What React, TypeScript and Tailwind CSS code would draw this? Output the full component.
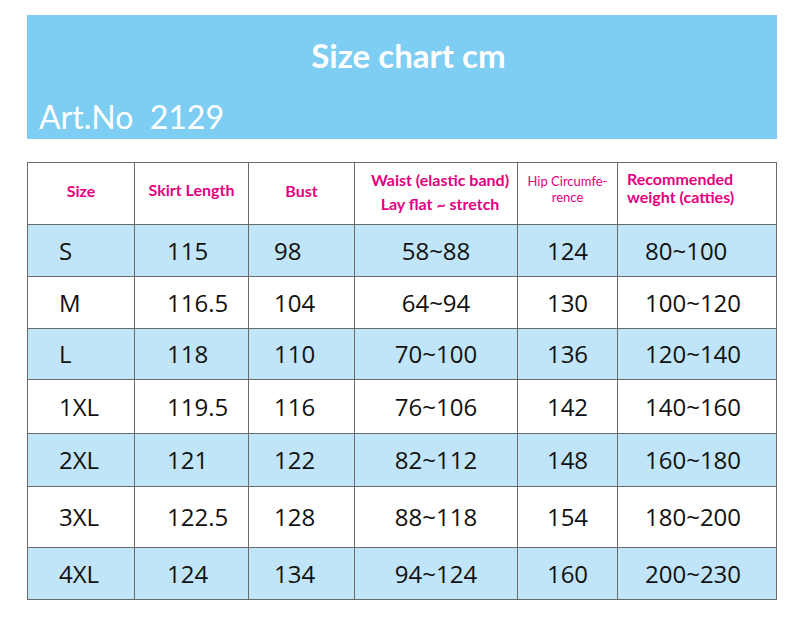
import React from "react";

const rows: { s: string; v: string[]; h: number; blue: boolean }[] = [
  { s: "S", v: ["115", "98", "58~88", "124", "80~100"], h: 52, blue: true },
  { s: "M", v: ["116.5", "104", "64~94", "130", "100~120"], h: 52, blue: false },
  { s: "L", v: ["118", "110", "70~100", "136", "120~140"], h: 51, blue: true },
  { s: "1XL", v: ["119.5", "116", "76~106", "142", "140~160"], h: 54, blue: false },
  { s: "2XL", v: ["121", "122", "82~112", "148", "160~180"], h: 53, blue: true },
  { s: "3XL", v: ["122.5", "128", "88~118", "154", "180~200"], h: 61, blue: false },
  { s: "4XL", v: ["124", "134", "94~124", "160", "200~230"], h: 52, blue: true },
];

const cellBase = "border border-[#6a6a6a] align-middle p-0";

export default function App() {
  return (
    <div className="w-[800px] h-[626px] bg-white relative" style={{ fontFamily: "Lato, 'Open Sans', sans-serif" }}>
      <div className="pt-[15px] pl-[27px]">
        <div className="w-[750px] h-[124px] bg-[#7ecdf2] flex flex-col">
          <div className="h-[57px] flex items-end justify-center pl-[13px] text-white font-bold text-[33px] leading-none" style={{ fontFamily: "Lato, sans-serif" }}>
            Size chart cm
          </div>
          <div className="mt-[29px] pl-[12px] text-white text-[32px] leading-none whitespace-pre" style={{ fontFamily: "Lato, sans-serif" }}>
            {"Art.No  2129"}
          </div>
        </div>
      </div>
      <div className="pt-[23px] pl-[27px]">
        <table className="border-collapse table-fixed w-[749px]">
          <colgroup>
            <col className="w-[107px]" />
            <col className="w-[114px]" />
            <col className="w-[106px]" />
            <col className="w-[163px]" />
            <col className="w-[100px]" />
            <col className="w-[159px]" />
          </colgroup>
          <thead>
            <tr className="h-[62px] text-[#e4007f] font-bold" style={{ fontFamily: "Lato, sans-serif" }}>
              <th className={`${cellBase} text-[16px] pb-[6px]`}>Size</th>
              <th className={`${cellBase} text-[16px] pb-[8px]`}>Skirt Length</th>
              <th className={`${cellBase} text-[16px] pb-[6px]`}>Bust</th>
              <th className={`${cellBase} text-[16px] leading-[24px] pl-[8px] pb-[4px]`}>
                <div>Waist (elastic band)</div>
                <div>Lay flat ~ stretch</div>
              </th>
              <th className={`${cellBase} text-[13px] leading-[16px] font-normal pb-[10px]`}>
                <div>Hip Circumfe-</div>
                <div>rence</div>
              </th>
              <th className={`${cellBase} text-[16px] leading-[18px] text-left pl-[9px] pb-[12px]`}>
                <div>Recommended</div>
                <div>weight (catties)</div>
              </th>
            </tr>
          </thead>
          <tbody style={{ fontFamily: "'Open Sans', sans-serif" }}>
            {rows.map((r) => (
              <tr key={r.s} className={`${r.blue ? "bg-[#c1e5f8]" : "bg-white"} text-[24px] text-[#111] leading-none`} style={{ height: r.h }}>
                <td className={`${cellBase} pl-[31px]`}>{r.s}</td>
                <td className={`${cellBase} pl-[32px]`}>{r.v[0]}</td>
                <td className={`${cellBase} pl-[25px]`}>{r.v[1]}</td>
                <td className={`${cellBase} text-center`}>{r.v[2]}</td>
                <td className={`${cellBase} text-center`}>{r.v[3]}</td>
                <td className={`${cellBase} pl-[27px]`}>{r.v[4]}</td>
              </tr>
            ))}
          </tbody>
        </table>
      </div>
    </div>
  );
}
